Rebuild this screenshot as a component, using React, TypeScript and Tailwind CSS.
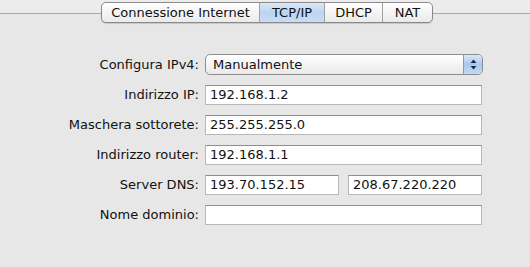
import React from 'react';

const tabs = [
  { label: 'Connessione Internet', w: 'w-[157px]' },
  { label: 'TCP/IP', w: 'w-[65px]', active: true },
  { label: 'DHCP', w: 'w-[58px]' },
  { label: 'NAT', w: 'w-[50px]' },
];

const Field: React.FC<{ value?: string; className?: string }> = ({ value, className }) => (
  <div
    className={`h-[20px] bg-white border border-[#b8b8b8] border-t-[#8e8e8e] flex items-center pl-[4px] text-[13px] text-[#111] ${className ?? ''}`}
  >
    {value}
  </div>
);

const Row: React.FC<{ label: string; children: React.ReactNode; top?: string }> = ({ label, children, top }) => (
  <div className={`flex items-center ${top ?? ''}`}>
    <div className="w-[200px] text-right pr-[1px] text-[13px] text-[#111] whitespace-nowrap">{label}</div>
    <div className="ml-[5px] flex gap-[9px]">{children}</div>
  </div>
);

export default function App() {
  return (
    <div className="w-[530px] h-[267px] bg-[#ececec] relative overflow-hidden font-['Lucida_Grande','DejaVu_Sans',sans-serif]">
      {/* panel */}
      <div className="mt-[13px] h-[254px] border-t border-[#a8a8a8] bg-[#e7e7e7] pt-[40px] flex flex-col">
        <Row label="Configura IPv4:">
          <div className="w-[278px] h-[21px] rounded-[5px] border border-[#8d8d8d] bg-gradient-to-b from-white to-[#e9e9e9] flex items-center">
            <span className="pl-[7px] flex-1 text-[13px] text-[#111]">Manualmente</span>
            <div className="w-[19px] h-full rounded-r-[4px] border-l border-[#7f9cc8] bg-gradient-to-b from-[#dbe8f8] via-[#a9c7ee] to-[#c3d9f4] flex items-center justify-center">
              <svg width="7" height="11" viewBox="0 0 7 11">
                <path d="M3.5 0.5 L6.5 4 L0.5 4 Z" fill="#1c2a40" />
                <path d="M3.5 10.5 L6.5 7 L0.5 7 Z" fill="#1c2a40" />
              </svg>
            </div>
          </div>
        </Row>
        <Row label="Indirizzo IP:" top="mt-[10px]">
          <Field value="192.168.1.2" className="w-[277px]" />
        </Row>
        <Row label="Maschera sottorete:" top="mt-[10px]">
          <Field value="255.255.255.0" className="w-[277px]" />
        </Row>
        <Row label="Indirizzo router:" top="mt-[10px]">
          <Field value="192.168.1.1" className="w-[277px]" />
        </Row>
        <Row label="Server DNS:" top="mt-[10px]">
          <Field value="193.70.152.15" className="w-[134px]" />
          <Field value="208.67.220.220" className="w-[134px]" />
        </Row>
        <Row label="Nome dominio:" top="mt-[10px]">
          <Field className="w-[277px]" />
        </Row>
      </div>

      {/* segmented tabs over the panel edge */}
      <div className="absolute top-[2px] left-[101px] h-[21px] flex rounded-[5px] border border-[#8a8a8a] overflow-hidden bg-gradient-to-b from-white to-[#eaeaea] shadow-[0_1px_1px_rgba(0,0,0,0.15)]">
        {tabs.map((t, i) => (
          <div
            key={t.label}
            className={`${t.w} h-full flex items-center justify-center text-[13px] text-[#111] ${i > 0 ? 'border-l border-[#a0a0a0]' : ''} ${
              t.active ? 'bg-gradient-to-b from-[#dce9f8] via-[#bcd4f1] to-[#c9ddf5]' : ''
            }`}
          >
            {t.label}
          </div>
        ))}
      </div>
    </div>
  );
}
